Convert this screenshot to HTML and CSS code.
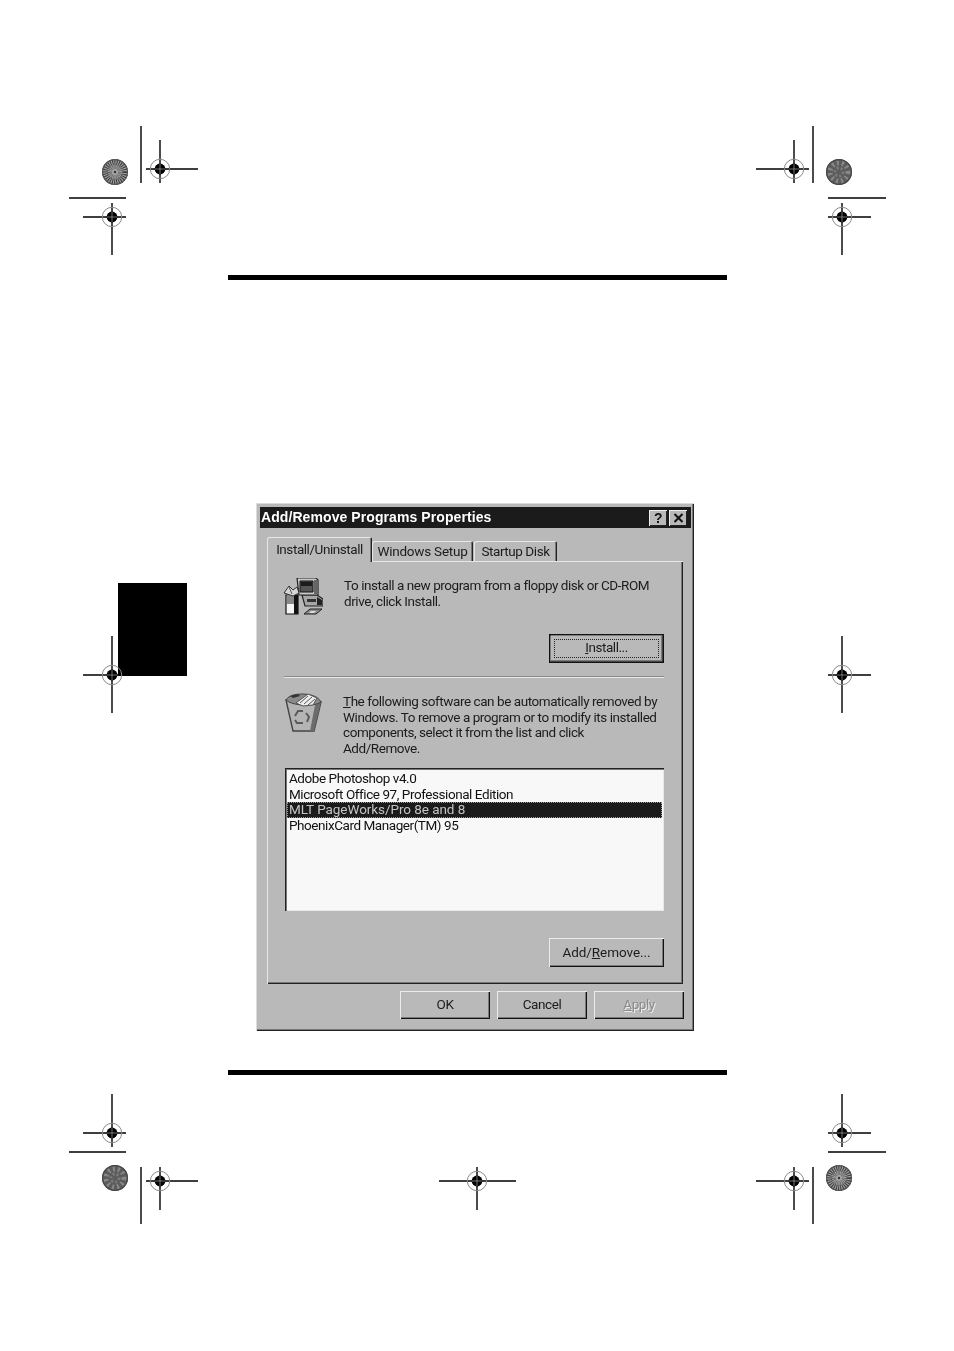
FILE: index.html
```html
<!DOCTYPE html>
<html lang="en">
<head>
<meta charset="utf-8">
<title>Add/Remove Programs Properties</title>
<link rel="stylesheet" href="styles.css">
</head>
<body>
<div class="page">
  <svg class="marks" width="954" height="1351" viewBox="0 0 954 1351" aria-hidden="true">
    <defs>
      <g id="reg">
        <circle r="9.7" fill="none" stroke="#8a8a8a" stroke-width="1"/>
        <circle r="5.4" fill="#000"/>
        <path d="M-5 0H5M0-5V5" stroke="#ddd" stroke-width=".5"/>
      </g>
      <g id="burst">
        <circle r="13" fill="#a4a4a4"/>
        <circle r="10" fill="none" stroke="#3c3c3c" stroke-width="6" stroke-dasharray="1.1 1.1"/>
        <circle r="5.5" fill="none" stroke="#666" stroke-width="5" stroke-dasharray=".8 .8"/>
        <circle r="12.4" fill="none" stroke="#555" stroke-width="1.2"/>
        <circle r="1.2" fill="#333"/>
      </g>
      <g id="dark">
        <circle r="13" fill="#5c5c5c"/>
        <circle r="9" fill="none" stroke="#888" stroke-width="5" stroke-dasharray="2 3"/>
        <circle r="4" fill="none" stroke="#7a7a7a" stroke-width="3" stroke-dasharray="2 2"/>
        <circle r="12.4" fill="none" stroke="#484848" stroke-width="1.2"/>
      </g>
    </defs>
    <g stroke="#000" stroke-width="1.4" fill="none">
      <path d="M141 126V183M69 198H126M813 126V183M828 198H886M69 1152H126M141 1167V1224M813 1167V1224M828 1152H886"/>
      <path d="M146 169H198M160 140V183M83 217H126M112 203V255"/>
      <path d="M756 169H809M794 140V183M828 217H871M842 203V255"/>
      <path d="M83 675H126M112 636V713M828 675H871M842 636V713"/>
      <path d="M83 1133H126M112 1094V1147M146 1181H198M160 1167V1210"/>
      <path d="M439 1181H516M477 1167V1210M756 1181H809M794 1167V1210M828 1133H871M842 1094V1147"/>
    </g>
    <use href="#reg" x="160" y="169"/><use href="#reg" x="112" y="217"/>
    <use href="#reg" x="794" y="169"/><use href="#reg" x="842" y="217"/>
    <use href="#reg" x="112" y="675"/><use href="#reg" x="842" y="675"/>
    <use href="#reg" x="112" y="1133"/><use href="#reg" x="842" y="1133"/>
    <use href="#reg" x="160" y="1181"/><use href="#reg" x="477" y="1181"/><use href="#reg" x="794" y="1181"/>
    <use href="#burst" x="115" y="172"/><use href="#dark" x="839" y="172"/>
    <use href="#dark" x="115" y="1178"/><use href="#burst" x="839" y="1178"/>
  </svg>
  <div class="thumb"></div>
  <div class="rule"></div>
  <div class="dialog">
    <div class="titlebar">
      <span class="title">Add/Remove Programs Properties</span>
      <span class="capbtns">
        <span class="capbtn">?</span>
        <span class="capbtn capclose"><svg width="11" height="10" viewBox="0 0 11 10"><path d="M1.5 1 9.5 9M9.5 1 1.5 9" stroke="#111" stroke-width="2"/></svg></span>
      </span>
    </div>
    <div class="tabs">
      <div class="tab active">Install/Uninstall</div>
      <div class="tab t2">Windows Setup</div>
      <div class="tab t3">Startup Disk</div>
    </div>
    <div class="panel">
      <div class="info install-info">
        <svg class="icon" width="40" height="37" viewBox="0 0 40 37">
          <path d="M19 17H34L40 21V28H22Z" fill="#a6a6a6" stroke="#222" stroke-width="1.2"/>
          <path d="M34 19 39 22V27H34Z" fill="#222"/>
          <path d="M24 21H33V24H24Z" fill="#333"/>
          <path d="M14 0H33L35 2V17H16Z" fill="#c8c8c8" stroke="#222" stroke-width="1.2"/>
          <path d="M17 3H30V14H17Z" fill="#555" stroke="#111"/>
          <path d="M18 4H29V8H18Z" fill="#1c1c1c"/>
          <path d="M31 2H34V16H31Z" fill="#666"/>
          <path d="M3 17H15V36H3Z" fill="#f4f4f4" stroke="#111" stroke-width="1.2"/>
          <path d="M4 17H12V26H4Z" fill="#888"/>
          <path d="M11 17H15V36H11Z" fill="#111"/>
          <path d="M1 15 6 8 10 12 14 9 16 15 10 18Z" fill="#d6d6d6" stroke="#333"/>
          <path d="M6 9 9 16" stroke="#555" fill="none"/>
          <path d="M27 31H39L33 36H21Z" fill="#8c8c8c" stroke="#222"/>
          <path d="M28 33H33L31 35H26Z" fill="#ddd"/>
        </svg>
        <p class="txt">To install a new program from a floppy disk or CD-ROM<br>drive, click Install.</p>
      </div>
      <div class="row-right install-row">
        <button class="btn default"><span class="focus"><u>I</u>nstall...</span></button>
      </div>
      <div class="sep"></div>
      <div class="info remove-info">
        <svg class="icon" width="37" height="39" viewBox="0 0 37 39">
          <path d="M1 7 36 9 29 38 8 38Z" fill="#b4b4b4" stroke="#444" stroke-width="1.4"/>
          <path d="M30 12 36 9 29 38 25 38Z" fill="#6c6c6c"/>
          <path d="M1 7C4 2 11 1 17 1 25 1 33 3 36 9 30 14 7 13 1 7Z" fill="#8a8a8a" stroke="#444"/>
          <path d="M5 3 13 1 15 3 8 5Z" fill="#333"/>
          <path d="M11 10 23 1 32 5 28 12 18 13Z" fill="#eee" stroke="#555"/>
          <path d="M15 10 23 3M19 11 27 4M23 12 30 6" stroke="#555" fill="none"/>
          <g stroke="#5a5a5a" stroke-width="2" fill="none">
            <path d="M10 23 13 18 18 18"/>
            <path d="M21 20 24 24 22 29"/>
            <path d="M18 30H12L10 27"/>
          </g>
        </svg>
        <p class="txt"><u>T</u>he following software can be automatically removed by<br>Windows. To remove a program or to modify its installed<br>components, select it from the list and click<br>Add/Remove.</p>
      </div>
      <div class="listbox">
        <div class="item">Adobe Photoshop v4.0</div>
        <div class="item">Microsoft Office 97, Professional Edition</div>
        <div class="item sel">MLT PageWorks/Pro 8e and 8</div>
        <div class="item">PhoenixCard Manager(TM) 95</div>
      </div>
      <div class="row-right remove-row">
        <button class="btn wide">Add/<u>R</u>emove...</button>
      </div>
    </div>
    <div class="actions">
      <button class="btn act">OK</button>
      <button class="btn act">Cancel</button>
      <button class="btn act off"><u>A</u>pply</button>
    </div>
  </div>
  <div class="rule bottom"></div>
</div>
</body>
</html>
```
FILE: styles.css
```css
html, body { margin: 0; padding: 0; background: #fff; }
.page {
  position: relative;
  width: 954px;
  height: 1351px;
  padding-top: 275px;
  box-sizing: border-box;
  overflow: hidden;
  font-family: Roboto, "Liberation Sans", Arial, sans-serif;
  color: #1c1c1c;
}
.marks { position: absolute; left: 0; top: 0; z-index: 2; }
.thumb { position: absolute; left: 118px; top: 583px; width: 69px; height: 93px; background: #000; }
.rule { width: 499px; height: 5px; margin-left: 228px; background: #000; }
.rule.bottom { margin-top: 39px; }

.dialog {
  width: 438px;
  height: 528px;
  margin: 223px 0 0 256px;
  box-sizing: border-box;
  padding: 4px 3px 0 4px;
  background: #b9b9b9;
  box-shadow: inset 1px 1px 0 #dcdcdc, inset -1px -1px 0 #222, inset -2px -2px 0 #777;
  font-size: 13.5px;
  letter-spacing: -.44px;
  white-space: nowrap;
  filter: blur(.4px);
}
.titlebar {
  height: 21px;
  background: #1b1b1b;
  display: flex;
  align-items: center;
  justify-content: space-between;
  padding: 0 4px 0 1px;
}
.title { color: #fff; font-family: "Liberation Sans", Arial, sans-serif; font-weight: bold; font-size: 14px; letter-spacing: .08px; padding-bottom: 2px; }
.capbtns { display: flex; gap: 2px; }
.capbtn {
  width: 18px;
  height: 16px;
  background: #b9b9b9;
  display: flex;
  align-items: center;
  justify-content: center;
  font-family: "Liberation Sans", Arial, sans-serif;
  font-weight: bold;
  font-size: 14px;
  color: #111;
  box-shadow: inset 1px 1px 0 #eee, inset -1px -1px 0 #222;
}
.tabs { display: flex; align-items: flex-end; margin: 9px 0 0 7px; height: 24px; position: relative; z-index: 1; }
.tab {
  height: 20px;
  line-height: 20px;
  text-align: center;
  box-sizing: border-box;
  background: #b9b9b9;
  border-radius: 2px 2px 0 0;
  box-shadow: inset 1px 1px 0 #e6e6e6, inset -1px 0 0 #222, inset -2px 0 0 #777;
}
.tab.active { width: 105px; height: 25px; line-height: 24px; margin-bottom: -1px; }
.tab.t2 { width: 101px; letter-spacing: -.22px; }
.tab.t3 { width: 83px; margin-left: 1px; }

.panel {
  width: 416px;
  height: 423px;
  margin-left: 7px;
  box-sizing: border-box;
  padding: 0 19px 0 17px;
  box-shadow: inset 1px 1px 0 #e6e6e6, inset -1px -1px 0 #222, inset -2px -2px 0 #777;
}
.info { display: flex; }
.icon { flex: none; }
.txt { margin: 0; line-height: 15.5px; }
.install-info { padding-top: 17px; gap: 21px; margin-left: -1px; }
.row-right { display: flex; justify-content: flex-end; }
.install-row { margin-top: 19px; }
.btn {
  display: block;
  width: 115px;
  height: 29px;
  padding: 0 0 2px;
  border: 0;
  background: #b9b9b9;
  font: 13.5px Roboto, "Liberation Sans", Arial, sans-serif;
  letter-spacing: -.44px;
  color: #1c1c1c;
  box-shadow: inset 1px 1px 0 #ececec, inset -1px -1px 0 #111, inset -2px -2px 0 #7a7a7a;
}
.btn.wide { letter-spacing: -.06px; }
.btn.default { padding: 0; box-shadow: inset 0 0 0 1.5px #111, inset 2px 2px 0 #ececec, inset -3px -3px 0 #7a7a7a; }
.focus {
  display: block;
  margin: 4px 5px;
  line-height: 15px;
  height: 19px;
  border: 1px dotted #222;
  box-sizing: border-box;
}
.sep { height: 1px; margin-top: 13px; background: #8c8c8c; box-shadow: 0 1px 0 #e8e8e8; }
.remove-info { padding-top: 16px; gap: 20px; margin-left: 1px; }
.remove-info .txt { margin-top: 1px; margin-left: 1px; }
.listbox {
  height: 143px;
  margin-top: 12px;
  margin-left: 1px;
  box-sizing: border-box;
  padding: 3px 2px 2px;
  background: #f8f8f8;
  box-shadow: inset 1px 1px 0 #222, inset 2px 2px 0 #777, inset -1px -1px 0 #e8e8e8;
}
.item { height: 15.5px; line-height: 15.5px; padding-left: 2px; color: #111; }
.sel { background: #1b1b1b; color: #c4c4c4; letter-spacing: -.06px; outline: 1px dotted #999; outline-offset: -1px; }
.remove-row { margin-top: 27px; }
.actions { display: flex; justify-content: flex-end; gap: 7px; margin: 7px 7px 0 0; }
.btn.act { width: 90px; height: 28px; }
.btn.off { color: #8a8a8a; text-shadow: 1px 1px 0 #eee; }
```
